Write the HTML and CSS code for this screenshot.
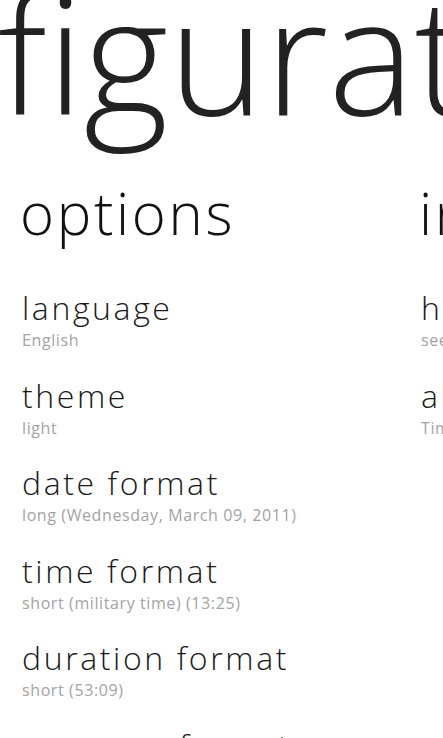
FILE: index.html
```html
<!DOCTYPE html>
<html lang="en">
<head>
<meta charset="utf-8">
<title>configuration</title>
<link rel="stylesheet" href="styles.css">
</head>
<body>
<div class="pano">
  <h1 class="title">figuration</h1>
  <div class="sections">
    <section class="section">
      <h2 class="header">options</h2>
      <ul class="items">
        <li class="item"><div class="name">language</div><div class="value">English</div></li>
        <li class="item"><div class="name">theme</div><div class="value">light</div></li>
        <li class="item"><div class="name">date format</div><div class="value">long (Wednesday, March 09, 2011)</div></li>
        <li class="item"><div class="name">time format</div><div class="value">short (military time) (13:25)</div></li>
        <li class="item"><div class="name">duration format</div><div class="value">short (53:09)</div></li>
        <li class="item"><div class="name">currency format</div><div class="value">default</div></li>
      </ul>
    </section>
    <section class="section">
      <h2 class="header">info</h2>
      <ul class="items">
        <li class="item"><div class="name">help</div><div class="value">see how it works</div></li>
        <li class="item"><div class="name">about</div><div class="value">Tim</div></li>
      </ul>
    </section>
  </div>
</div>
</body>
</html>
```
FILE: styles.css
```css
html, body {
  margin: 0;
  padding: 0;
  background: #ffffff;
}
body {
  font-family: "Open Sans", "Segoe UI", sans-serif;
  font-weight: 300;
  color: #1c1c1c;
}
.pano {
  width: 443px;
  height: 738px;
  overflow: hidden;
  padding-top: 2px;
  box-sizing: border-box;
}
.title {
  margin: 0 0 0 -2px;
  font-size: 163px;
  line-height: 100px;
  font-weight: 300;
  white-space: nowrap;
  color: #222222;
  letter-spacing: 0;
}
.sections {
  display: flex;
  margin-top: 82px;
}
.section {
  flex: 0 0 399px;
  padding-left: 22px;
  box-sizing: border-box;
  white-space: nowrap;
}
.header {
  margin: 0 0 0 -2px;
  font-size: 58px;
  line-height: 58px;
  font-weight: 300;
  letter-spacing: 2.7px;
  color: #111111;
}
.items {
  list-style: none;
  margin: 46px 0 0 0;
  padding: 0;
  display: flex;
  flex-direction: column;
  gap: 23.5px;
}
.item {
  display: flex;
  flex-direction: column;
}
.name {
  font-size: 32px;
  line-height: 40px;
  letter-spacing: 2.6px;
  color: #1a1a1a;
}
.value {
  font-size: 16px;
  line-height: 24px;
  font-weight: 400;
  letter-spacing: 0.6px;
  color: #a3a3a3;
}
```
